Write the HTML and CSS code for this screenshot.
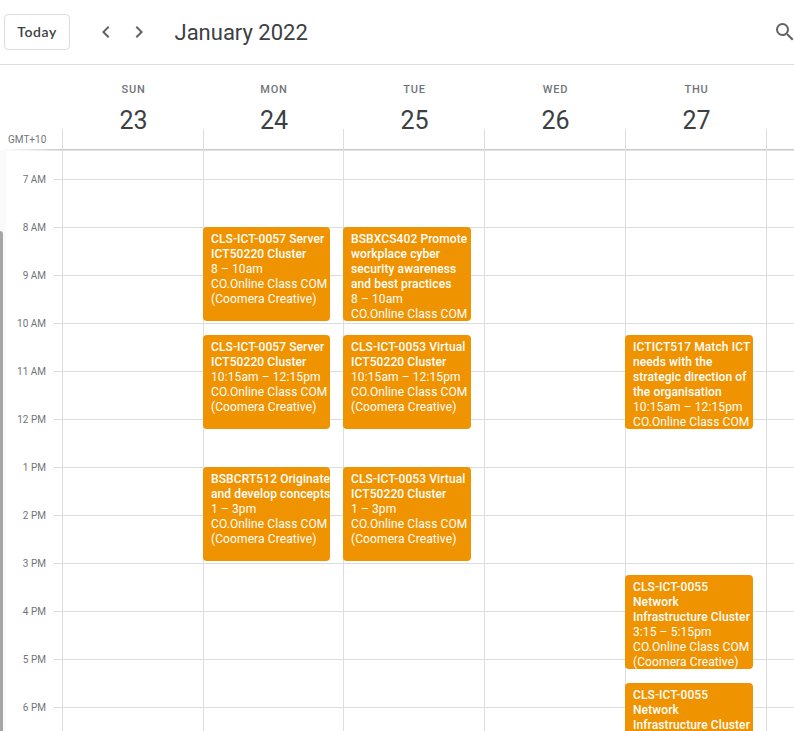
FILE: index.html
```html
<!DOCTYPE html>
<html lang="en">
<head>
<meta charset="utf-8">
<title>Calendar</title>
<link rel="stylesheet" href="styles.css">
</head>
<body>
<header class="toolbar">
  <button class="today">Today</button>
  <button class="icon prev" aria-label="Previous week"><svg width="24" height="24" viewBox="0 0 24 24"><path d="M15.41 7.41 14 6l-6 6 6 6 1.41-1.41L10.83 12z"/></svg></button>
  <button class="icon next" aria-label="Next week"><svg width="24" height="24" viewBox="0 0 24 24"><path d="M10 6 8.59 7.41 13.17 12l-4.58 4.59L10 18l6-6z"/></svg></button>
  <h1>January 2022</h1>
  <button class="icon search" aria-label="Search"><svg width="24" height="24" viewBox="0 0 24 24"><path d="M15.5 14h-.79l-.28-.27A6.47 6.47 0 0 0 16 9.5 6.5 6.5 0 1 0 9.5 16c1.61 0 3.09-.59 4.23-1.57l.27.28v.79l5 4.99L20.49 19zm-6 0a4.5 4.5 0 1 1 0-9 4.5 4.5 0 0 1 0 9"/></svg></button>
</header>
<section class="days">
  <div class="zone">GMT+10</div>
  <div class="day"><span>SUN</span><b>23</b></div>
  <div class="day"><span>MON</span><b>24</b></div>
  <div class="day"><span>TUE</span><b>25</b></div>
  <div class="day"><span>WED</span><b>26</b></div>
  <div class="day"><span>THU</span><b>27</b></div>
  <div class="day"></div>
</section>
<main class="week">
  <div class="rail"><div class="thumb"></div></div>
  <div class="hours">
    <span>7 AM</span><span>8 AM</span><span>9 AM</span><span>10 AM</span><span>11 AM</span><span>12 PM</span><span>1 PM</span><span>2 PM</span><span>3 PM</span><span>4 PM</span><span>5 PM</span><span>6 PM</span>
  </div>
  <div class="ticks"></div>
  <div class="col"></div>
  <div class="col">
    <article class="event at-8"><strong>CLS-ICT-0057 Server<br>ICT50220 Cluster</strong><p>8 – 10am<br>CO.Online Class COM<br>(Coomera Creative)</p></article>
    <article class="event at-1015"><strong>CLS-ICT-0057 Server<br>ICT50220 Cluster</strong><p>10:15am – 12:15pm<br>CO.Online Class COM<br>(Coomera Creative)</p></article>
    <article class="event at-13"><strong>BSBCRT512 Originate<br>and develop concepts</strong><p>1 – 3pm<br>CO.Online Class COM<br>(Coomera Creative)</p></article>
  </div>
  <div class="col">
    <article class="event at-8"><strong>BSBXCS402 Promote<br>workplace cyber<br>security awareness<br>and best practices</strong><p>8 – 10am<br>CO.Online Class COM</p></article>
    <article class="event at-1015"><strong>CLS-ICT-0053 Virtual<br>ICT50220 Cluster</strong><p>10:15am – 12:15pm<br>CO.Online Class COM<br>(Coomera Creative)</p></article>
    <article class="event at-13"><strong>CLS-ICT-0053 Virtual<br>ICT50220 Cluster</strong><p>1 – 3pm<br>CO.Online Class COM<br>(Coomera Creative)</p></article>
  </div>
  <div class="col"></div>
  <div class="col">
    <article class="event at-1015"><strong>ICTICT517 Match ICT<br>needs with the<br>strategic direction of<br>the organisation</strong><p>10:15am – 12:15pm<br>CO.Online Class COM</p></article>
    <article class="event at-1515"><strong>CLS-ICT-0055<br>Network<br>Infrastructure Cluster</strong><p>3:15 – 5:15pm<br>CO.Online Class COM<br>(Coomera Creative)</p></article>
    <article class="event at-1730"><strong>CLS-ICT-0055<br>Network<br>Infrastructure Cluster</strong></article>
  </div>
  <div class="col"></div>
</main>
</body>
</html>
```

FILE: styles.css
```css
* { box-sizing: border-box; }

body {
  margin: 0;
  width: 794px;
  height: 731px;
  overflow: hidden;
  background: #fff;
  color: #3c4043;
  font-family: Roboto, "Liberation Sans", sans-serif;
}

.toolbar {
  display: flex;
  align-items: center;
  height: 65px;
  padding-left: 4px;
  border-bottom: 1px solid #dadce0;
  overflow: hidden;
}

button {
  margin: 0;
  padding: 0;
  border: 0;
  background: none;
  color: inherit;
  flex: none;
}

.today {
  width: 66px;
  height: 36px;
  padding-bottom: 1px;
  border: 1px solid #dadce0;
  border-radius: 4px;
  font: 600 14px Lato, sans-serif;
  letter-spacing: .6px;
}

.icon { width: 24px; height: 24px; fill: #5f6368; }
.icon svg { display: block; }
.prev { margin-left: 24px; }
.next { margin-left: 8.5px; }
.search { margin-left: auto; margin-right: -3px; }

h1 {
  margin: 2px 0 0 24px;
  font: 400 22px/28px Roboto, sans-serif;
}

.days, .week {
  display: grid;
  grid-template-columns: 62px 141px 140px 141px 141px 141px 141px;
}

.days {
  height: 86px;
  overflow: hidden;
  background: linear-gradient(90deg, transparent, #c8c8c8 62px) 0 84px / 100% 1px no-repeat,
    linear-gradient(90deg, transparent, #e4e4e4 62px) 0 85px / 100% 1px no-repeat;
}

.zone {
  padding: 69px 0 0 8px;
  font-size: 10px;
  line-height: 12px;
  color: #70757a;
}

.day {
  padding-left: 2px;
  text-align: center;
  background: linear-gradient(#dadce0, #dadce0) 0 64px / 1px 22px no-repeat;
}

.day span {
  display: block;
  margin-top: 18px;
  font-size: 11px;
  font-weight: 500;
  line-height: 13px;
  letter-spacing: .8px;
  color: #70757a;
}

.day b {
  display: block;
  margin-top: 9px;
  font: 400 25px/32px Roboto, sans-serif;
}

.week {
  grid-template-columns: 6px 48px 8px 141px 140px 141px 141px 141px 141px;
  height: 580px;
  overflow: hidden;
}

.rail { padding-top: 80px; background: #fafafa; }
.thumb { width: 3px; height: 500px; border-radius: 0 3px 0 0; background: #a6a6a6; }

.hours {
  display: flex;
  flex-direction: column;
  padding: 5px 8px 0 0;
}

.hours span {
  height: 48px;
  flex: none;
  font-size: 10px;
  line-height: 48px;
  text-align: right;
  color: #70757a;
}

.ticks, .col {
  background: repeating-linear-gradient(#dadce0 0 1px, transparent 1px 48px) 0 28px / 100% 552px no-repeat;
}

.col {
  display: grid;
  grid-template-rows: repeat(48, 12px);
  align-content: start;
  padding: 28px 13px 0 0;
  border-left: 1px solid #dadce0;
}

.event {
  grid-row-end: span 8;
  height: 94px;
  margin-left: -1px;
  padding: 5px 0 0 8px;
  overflow: hidden;
  border-radius: 4px;
  background: #f09300;
  color: #fff;
  font-size: 12px;
  line-height: 15px;
  letter-spacing: .1px;
  white-space: nowrap;
}

.event strong { display: block; font-weight: 500; }
.event p { margin: 0; }

.at-8 { grid-row-start: 5; }
.at-1015 { grid-row-start: 14; }
.at-13 { grid-row-start: 25; }
.at-1515 { grid-row-start: 34; }
.at-1730 { grid-row-start: 43; }
```
